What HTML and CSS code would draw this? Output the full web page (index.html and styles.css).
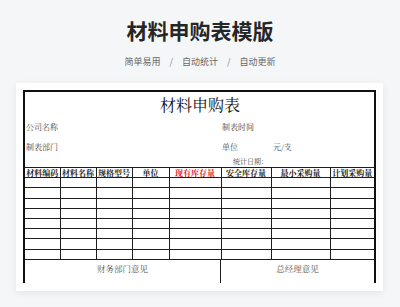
FILE: index.html
```html
<!DOCTYPE html>
<html lang="zh">
<head>
<meta charset="utf-8">
<link rel="stylesheet" href="styles.css">
</head>
<body>
<header class="hero">
  <h1 class="hero-title">材料申购表模版</h1>
  <p class="hero-sub"><span>简单易用</span><span class="sep">/</span><span>自动统计</span><span class="sep">/</span><span>自动更新</span></p>
</header>
<main class="card">
  <div class="form">
    <div class="info">
      <div class="form-title">材料申购表</div>
      <div class="info-row r1"><span>公司名称</span><span>制表时间</span><span></span></div>
      <div class="info-row r2"><span>制表部门</span><span>单位</span><span>元/支</span></div>
      <div class="info-date">统计日期：</div>
    </div>
    <table class="grid">
      <colgroup>
        <col style="width:35px"><col style="width:36px"><col style="width:36px"><col style="width:37px">
        <col style="width:52px"><col style="width:50px"><col style="width:59px"><col style="width:44px">
      </colgroup>
      <thead>
        <tr><th>材料编码</th><th>材料名称</th><th>规格型号</th><th>单位</th><th class="red">现有库存量</th><th>安全库存量</th><th>最小采购量</th><th>计划采购量</th></tr>
      </thead>
      <tbody>
        <tr><td></td><td></td><td></td><td></td><td></td><td></td><td></td><td></td></tr>
        <tr><td></td><td></td><td></td><td></td><td></td><td></td><td></td><td></td></tr>
        <tr><td></td><td></td><td></td><td></td><td></td><td></td><td></td><td></td></tr>
        <tr><td></td><td></td><td></td><td></td><td></td><td></td><td></td><td></td></tr>
        <tr><td></td><td></td><td></td><td></td><td></td><td></td><td></td><td></td></tr>
        <tr><td></td><td></td><td></td><td></td><td></td><td></td><td></td><td></td></tr>
        <tr><td></td><td></td><td></td><td></td><td></td><td></td><td></td><td></td></tr>
        <tr><td></td><td></td><td></td><td></td><td></td><td></td><td></td><td></td></tr>
      </tbody>
    </table>
    <div class="opinions">
      <div class="op op-left">财务部门意见</div>
      <div class="op op-right">总经理意见</div>
    </div>
  </div>
</main>
</body>
</html>
```
FILE: styles.css
```css
* { box-sizing: border-box; }
html, body { margin: 0; padding: 0; }
body {
  width: 400px;
  height: 307px;
  overflow: hidden;
  background: #f5f6f8;
  font-family: "Noto Sans CJK SC", "Noto Sans", sans-serif;
}
.hero { text-align: center; padding-top: 16px; }
.hero-title {
  margin: 0;
  font-size: 21px;
  line-height: 28px;
  font-weight: 700;
  color: #262626;
}
.hero-sub {
  margin: 11px 0 0;
  font-size: 9px;
  line-height: 14px;
  color: #666;
  display: flex;
  justify-content: center;
  gap: 9px;
}
.hero-sub .sep { color: #888; }
.card {
  margin: 14px 0 0 16px;
  width: 367px;
  height: 208px;
  background: #fff;
  padding: 7px 7px 8px;
  box-shadow: 0 2px 8px rgba(0,0,0,0.07);
}
.form {
  height: 193px;
  border: 2px solid #111;
  border-bottom: none;
  font-family: "Noto Serif CJK SC", "Noto Sans CJK SC", serif;
  color: #333;
  display: flex;
  flex-direction: column;
}
.info { height: 75px; padding: 3px 0 0 1px; flex: none; }
.form-title {
  text-align: center;
  font-size: 16px;
  line-height: 20px;
  color: #111;
}
.info-row {
  display: grid;
  grid-template-columns: 196px 51px 1fr;
  font-size: 8px;
  line-height: 12px;
  color: #444;
}
.r1 { margin-top: 6px; }
.r2 { margin-top: 8px; }
.info-date {
  margin: 3px 0 0 207px;
  font-size: 7px;
  line-height: 10px;
  color: #444;
}
.grid {
  width: 349px;
  table-layout: fixed;
  border-collapse: collapse;
  flex: none;
}
.grid th, .grid td {
  border: 1px solid #1f1f1f;
  padding: 0;
  height: 10.2px;
  line-height: 9px;
}
.grid tr > :first-child { border-left: none; }
.grid tr > :last-child { border-right: none; }
.grid th {
  font-size: 8px;
  font-weight: 700;
  color: #222;
  text-align: center;
  white-space: nowrap;
}
.grid th.red { color: #e02020; }
.opinions {
  flex: 1;
  display: grid;
  grid-template-columns: 196px 1fr;
}
.op {
  text-align: center;
  font-size: 8.5px;
  line-height: 14px;
  color: #555;
  padding-top: 1px;
}
.op-left { border-right: 1px solid #1f1f1f; }
```
